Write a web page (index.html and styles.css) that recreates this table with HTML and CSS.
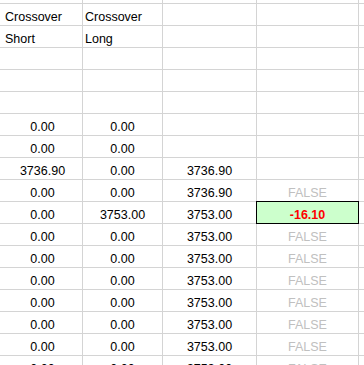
FILE: index.html
```html
<!DOCTYPE html>
<html>
<head>
<meta charset="utf-8">
<title>Crossover</title>
<link rel="stylesheet" href="styles.css">
</head>
<body>
<div class="sheet">
  <div class="c"></div><div class="c"></div><div class="c"></div><div class="c"></div><div class="c"></div><div class="c"></div>

  <div class="c"></div><div class="c txt">Crossover</div><div class="c txt">Crossover</div><div class="c"></div><div class="c"></div><div class="c"></div>
  <div class="c"></div><div class="c txt">Short</div><div class="c txt">Long</div><div class="c"></div><div class="c"></div><div class="c"></div>
  <div class="c"></div><div class="c"></div><div class="c"></div><div class="c"></div><div class="c"></div><div class="c"></div>
  <div class="c"></div><div class="c"></div><div class="c"></div><div class="c"></div><div class="c"></div><div class="c"></div>
  <div class="c"></div><div class="c"></div><div class="c"></div><div class="c"></div><div class="c"></div><div class="c"></div>

  <div class="c"></div><div class="c num">0.00</div><div class="c num">0.00</div><div class="c"></div><div class="c"></div><div class="c"></div>
  <div class="c"></div><div class="c num">0.00</div><div class="c num">0.00</div><div class="c"></div><div class="c"></div><div class="c"></div>
  <div class="c"></div><div class="c num">3736.90</div><div class="c num">0.00</div><div class="c num">3736.90</div><div class="c"></div><div class="c"></div>
  <div class="c"></div><div class="c num">0.00</div><div class="c num">0.00</div><div class="c num">3736.90</div><div class="c flag">FALSE</div><div class="c"></div>
  <div class="c"></div><div class="c num">0.00</div><div class="c num">3753.00</div><div class="c num">3753.00</div><div class="c num hit">-16.10</div><div class="c"></div>
  <div class="c"></div><div class="c num">0.00</div><div class="c num">0.00</div><div class="c num">3753.00</div><div class="c flag">FALSE</div><div class="c"></div>
  <div class="c"></div><div class="c num">0.00</div><div class="c num">0.00</div><div class="c num">3753.00</div><div class="c flag">FALSE</div><div class="c"></div>
  <div class="c"></div><div class="c num">0.00</div><div class="c num">0.00</div><div class="c num">3753.00</div><div class="c flag">FALSE</div><div class="c"></div>
  <div class="c"></div><div class="c num">0.00</div><div class="c num">0.00</div><div class="c num">3753.00</div><div class="c flag">FALSE</div><div class="c"></div>
  <div class="c"></div><div class="c num">0.00</div><div class="c num">0.00</div><div class="c num">3753.00</div><div class="c flag">FALSE</div><div class="c"></div>
  <div class="c"></div><div class="c num">0.00</div><div class="c num">0.00</div><div class="c num">3753.00</div><div class="c flag">FALSE</div><div class="c"></div>
  <div class="c"></div><div class="c num">0.00</div><div class="c num">0.00</div><div class="c num">3753.00</div><div class="c flag">FALSE</div><div class="c"></div>
</div>
</body>
</html>
```
FILE: styles.css
```css
html, body {
  margin: 0;
  padding: 0;
  background: #ffffff;
}

body {
  width: 364px;
  height: 365px;
  overflow: hidden;
}

/* worksheet: gridlines are the 1px gaps between white cells */
.sheet {
  display: grid;
  grid-template-columns: 2px 79px 79px 93px 101px 1fr;
  grid-template-rows: 3px;
  grid-auto-rows: 21px;
  gap: 1px;
  background: #d4d4d4;
  font-family: "Liberation Sans", Arial, sans-serif;
  font-size: 12.5px;
  line-height: 14px;
  color: #000000;
}

.c {
  background: #ffffff;
  display: flex;
  align-items: flex-end;
  padding: 0 2px 1px;
  overflow: hidden;
  white-space: nowrap;
  min-width: 0;
}

.txt {
  justify-content: flex-start;
}

.num,
.flag {
  justify-content: center;
}

.flag {
  color: #c0c0c0;
}

/* highlighted result cell */
.hit {
  background: #ccffcc;
  outline: 1px solid #000000;
  color: #ff0000;
  font-weight: bold;
}
```
